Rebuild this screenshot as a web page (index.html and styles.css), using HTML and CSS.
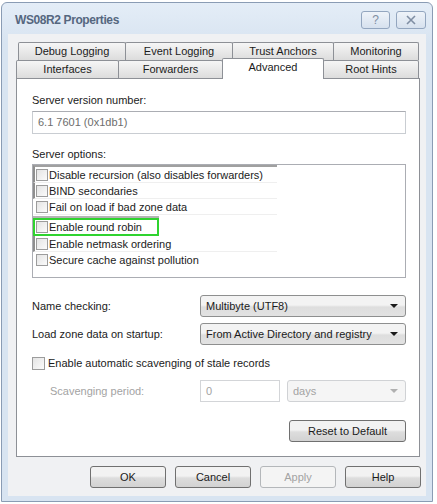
FILE: index.html
```html
<!DOCTYPE html>
<html lang="en">
<head>
  <meta charset="UTF-8" />
  <title>WS08R2 Properties</title>
  <link rel="stylesheet" href="styles.css">
</head>
<body>
  <div class="window">
    <div class="titlebar">
      <span class="title">WS08R2 Properties</span>
      <div class="caption-btns">
        <span class="cap-btn">?</span>
        <span class="cap-btn close">
          <svg width="12" height="10" viewBox="0 0 12 10"><path d="M2 1 L10 9 M10 1 L2 9" stroke="#7f8ea3" stroke-width="1.6" fill="none"/></svg>
        </span>
      </div>
    </div>

    <div class="client">
      <div class="tabs row1">
        <div class="tab">Debug Logging</div>
        <div class="tab">Event Logging</div>
        <div class="tab">Trust Anchors</div>
        <div class="tab">Monitoring</div>
      </div>
      <div class="tabs row2">
        <div class="tab">Interfaces</div>
        <div class="tab">Forwarders</div>
        <div class="tab active">Advanced</div>
        <div class="tab">Root Hints</div>
      </div>

      <div class="panel">
        <div class="label first">Server version number:</div>
        <div class="textbox readonly">6.1 7601 (0x1db1)</div>

        <div class="label options">Server options:</div>
        <div class="listbox">
          <div class="item bar top"><span class="cb"></span>Disable recursion (also disables forwarders)</div>
          <div class="item bar"><span class="cb"></span>BIND secondaries</div>
          <div class="item"><span class="cb"></span>Fail on load if bad zone data</div>
          <div class="item focus"><span class="cb"></span>Enable round robin</div>
          <div class="item bar"><span class="cb"></span>Enable netmask ordering</div>
          <div class="item last"><span class="cb"></span>Secure cache against pollution</div>
        </div>

        <div class="field first-field">
          <span class="field-label">Name checking:</span>
          <div class="combo">Multibyte (UTF8)<span class="arrow"></span></div>
        </div>
        <div class="field second-field">
          <span class="field-label">Load zone data on startup:</span>
          <div class="combo">From Active Directory and registry<span class="arrow"></span></div>
        </div>

        <label class="check-row"><span class="cb big"></span>Enable automatic scavenging of stale records</label>

        <div class="field scav">
          <span class="field-label disabled">Scavenging period:</span>
          <div class="textbox small disabled">0</div>
          <div class="combo days disabled">days<span class="arrow"></span></div>
        </div>

        <div class="reset-row">
          <button class="btn reset">Reset to Default</button>
        </div>
      </div>

      <div class="footer">
        <button class="btn">OK</button>
        <button class="btn">Cancel</button>
        <button class="btn disabled">Apply</button>
        <button class="btn">Help</button>
      </div>
    </div>
  </div>
</body>
</html>
```

FILE: styles.css
```css
:root {
  --frame: #d8e4f1;
  --frame-border: #8a9cb4;
  --client: #f0f1f3;
  --line: #8d9096;
  --text: #1b1b1b;
  --muted: #a3a3a3;
  --font: "Liberation Sans", Arial, sans-serif;
}

body {
  margin: 0;
  background: #ffffff;
  font-family: var(--font);
  font-size: 11px;
  color: var(--text);
}

.window {
  margin: 2px 0 0 1px;
  width: 432px;
  height: 500px;
  box-sizing: border-box;
  border: 1px solid var(--frame-border);
  border-radius: 6px 6px 0 0;
  background: linear-gradient(#e4edf7, var(--frame) 40px);
  display: flex;
  flex-direction: column;
}

.titlebar {
  height: 31px;
  display: flex;
  align-items: flex-start;
  justify-content: space-between;
  padding: 0 6px 0 13px;
}

.title {
  margin-top: 10px;
  font-size: 12px;
  font-weight: bold;
  color: #55677f;
  letter-spacing: -0.4px;
}

.caption-btns {
  display: flex;
  gap: 6px;
  margin-top: 8px;
}

.cap-btn {
  width: 27px;
  height: 16px;
  border: 1px solid #93a6bf;
  border-radius: 3px;
  background: linear-gradient(#eef3f9, #d6e1ee);
  display: flex;
  align-items: center;
  justify-content: center;
  color: #7f8ea3;
  font-size: 12px;
}

.cap-btn.close {
  width: 28px;
}

.client {
  flex: 1;
  margin: 0 6px 5px 6px;
  background: var(--client);
  padding: 8px 0 0 8px;
}

.tabs {
  display: flex;
  height: 18px;
}

.row1 {
  margin-left: 2px;
}

.tab {
  box-sizing: border-box;
  border: 1px solid var(--line);
  border-bottom: none;
  border-radius: 2px 2px 0 0;
  background: linear-gradient(#f6f6f6, #dcdcdc);
  text-align: center;
  line-height: 17px;
  margin-right: -1px;
  white-space: nowrap;
}

.row1 .tab:nth-child(1) { width: 108px; }
.row1 .tab:nth-child(2) { width: 108px; }
.row1 .tab:nth-child(3) { width: 102px; }
.row1 .tab:nth-child(4) { width: 86px; }

.row2 .tab:nth-child(1) { width: 103px; }
.row2 .tab:nth-child(2) { width: 105px; }
.row2 .tab:nth-child(3) { width: 102px; }
.row2 .tab:nth-child(4) { width: 96px; }

.tab.active {
  position: relative;
  z-index: 1;
  background: #ffffff;
  height: 21px;
  margin-top: -2px;
  line-height: 17px;
}

.panel {
  width: 404px;
  height: 379px;
  box-sizing: border-box;
  border: 1px solid var(--line);
  background: #ffffff;
  padding: 0 13px 0 15px;
}

.label {
  line-height: 15px;
}

.label.first {
  margin-top: 14px;
}

.label.options {
  margin-top: 13px;
}

.textbox {
  box-sizing: border-box;
  height: 23px;
  margin-top: 3px;
  border: 1px solid #c9cdd2;
  border-top-color: #abadb3;
  padding-left: 5px;
  line-height: 21px;
}

.textbox.readonly {
  color: #6d6d6d;
}

.listbox {
  box-sizing: border-box;
  height: 114px;
  margin-top: 2px;
  border: 1px solid #abadb3;
  padding-top: 2px;
}

.item {
  box-sizing: border-box;
  width: 244px;
  height: 16px;
  display: flex;
  align-items: center;
  border-bottom: 1px solid #efefef;
  border-left: 2px solid transparent;
  padding-left: 1px;
  white-space: nowrap;
}

.item.top {
  border-top: 2px solid #a0a0a0;
  margin-top: -2px;
  height: 18px;
}

.item.bar {
  border-left-color: #8f8f8f;
}

.item.focus {
  width: 126px;
  height: 18px;
  margin-top: 3px;
  border: 2px solid #2fd32f;
  padding-left: 1px;
  box-shadow: 0 -2px 0 #b4b4b4;
}

.item.last {
  border-bottom: none;
}

.cb {
  box-sizing: border-box;
  width: 12px;
  height: 12px;
  border: 1px solid #9c9c9c;
  background: linear-gradient(135deg, #e4e4e4, #fbfbfb);
  margin-right: 1px;
  flex: none;
}

.field {
  display: flex;
  align-items: center;
}

.field-label {
  width: 168px;
}

.field-label.disabled {
  color: var(--muted);
  padding-left: 18px;
  width: 150px;
}

.first-field {
  margin-top: 17px;
}

.second-field {
  margin-top: 6px;
}

.combo {
  position: relative;
  box-sizing: border-box;
  flex: 1;
  height: 22px;
  border: 1px solid #8e8f8f;
  border-radius: 3px;
  background: linear-gradient(#f3f3f3 45%, #dedede 55%, #e2e2e2);
  padding-left: 5px;
  line-height: 20px;
}

.arrow {
  position: absolute;
  right: 7px;
  top: 8px;
  border-left: 4px solid transparent;
  border-right: 4px solid transparent;
  border-top: 4px solid #1a1a1a;
}

.check-row {
  display: flex;
  align-items: center;
  margin-top: 11px;
  height: 14px;
}

.cb.big {
  width: 13px;
  height: 13px;
  margin-right: 3px;
}

.scav {
  margin-top: 10px;
}

.textbox.small {
  width: 80px;
  margin-top: 0;
  height: 22px;
  line-height: 20px;
}

.textbox.disabled {
  color: var(--muted);
  border-color: #d3d5d8;
}

.combo.days {
  margin-left: 7px;
}

.combo.disabled {
  background: #f5f5f5;
  border-color: #d0d2d5;
  color: var(--muted);
}

.combo.disabled .arrow {
  border-top-color: #b0b0b0;
}

.reset-row {
  display: flex;
  justify-content: flex-end;
  margin-top: 18px;
}

.btn {
  box-sizing: border-box;
  width: 76px;
  height: 22px;
  border: 1px solid #707070;
  border-radius: 3px;
  background: linear-gradient(#f2f2f2 45%, #dddddd 55%, #d2d2d2);
  font-family: var(--font);
  font-size: 11px;
  color: var(--text);
  padding: 0;
}

.btn.reset {
  width: 117px;
}

.btn.disabled {
  border-color: #b4b7ba;
  background: #f4f4f4;
  color: var(--muted);
}

.footer {
  display: flex;
  justify-content: flex-end;
  gap: 9px;
  margin-top: 9px;
  padding-right: 5px;
}
```
